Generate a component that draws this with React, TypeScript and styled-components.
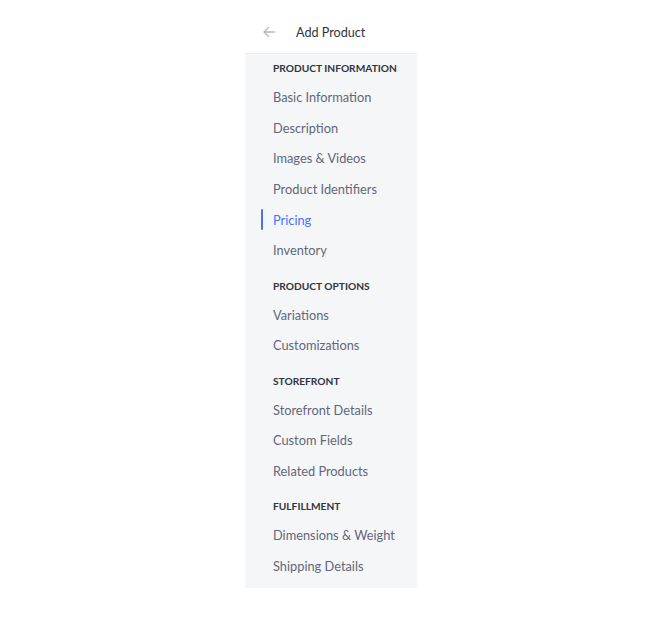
import React, { useState } from 'react';
import styled, { createGlobalStyle } from 'styled-components';

const GlobalStyle = createGlobalStyle`
  html, body {
    margin: 0;
    padding: 0;
    background: #fff;
  }
  body {
    font-family: Lato, "Liberation Sans", sans-serif;
    -webkit-font-smoothing: antialiased;
  }
`;

type Section = {
  title: string;
  items: string[];
};

const sections: Section[] = [
  {
    title: 'Product Information',
    items: ['Basic Information', 'Description', 'Images & Videos', 'Product Identifiers', 'Pricing', 'Inventory'],
  },
  {
    title: 'Product Options',
    items: ['Variations', 'Customizations'],
  },
  {
    title: 'Storefront',
    items: ['Storefront Details', 'Custom Fields', 'Related Products'],
  },
  {
    title: 'Fulfillment',
    items: ['Dimensions & Weight', 'Shipping Details'],
  },
];

const BackArrow = () => (
  <svg width="14" height="14" viewBox="0 0 14 14" fill="none">
    <path d="M12.5 7H2M6.5 2.5L2 7l4.5 4.5" stroke="#b4b8c4" strokeWidth="1.4" strokeLinecap="round" strokeLinejoin="round" />
  </svg>
);

export default function App() {
  const [active, setActive] = useState('Pricing');

  return (
    <Page>
      <GlobalStyle />
      <Sidebar>
        <Header>
          <BackButton aria-label="Back">
            <BackArrow />
          </BackButton>
          <HeaderTitle>Add Product</HeaderTitle>
        </Header>
        <Nav>
          {sections.map(section => (
            <Group key={section.title}>
              <GroupTitle>{section.title}</GroupTitle>
              {section.items.map(item => (
                <NavItem key={item} $active={item === active} onClick={() => setActive(item)}>
                  {item}
                </NavItem>
              ))}
            </Group>
          ))}
        </Nav>
      </Sidebar>
    </Page>
  );
}

const Page = styled.div`
  width: 665px;
  height: 617px;
  padding-top: 10px;
  box-sizing: border-box;
  padding-left: 245px;
`;

const Sidebar = styled.aside`
  width: 172px;
  display: flex;
  flex-direction: column;
`;

const Header = styled.div`
  height: 43px;
  display: flex;
  align-items: center;
  padding-left: 17px;
  box-sizing: border-box;
`;

const BackButton = styled.button`
  border: 0;
  background: none;
  padding: 0;
  width: 14px;
  height: 14px;
  display: flex;
  align-items: center;
  justify-content: center;
  margin-right: 20px;
  margin-top: 1px;
  cursor: pointer;
`;

const HeaderTitle = styled.h1`
  margin: 0 0 -1px;
  font-size: 12.6px;
  font-weight: 400;
  color: #313440;
`;

const Nav = styled.nav`
  background: #f5f6f8;
  border-top: 1px solid #eceef2;
  padding: 0 0 7px;
  display: flex;
  flex-direction: column;
`;

const Group = styled.div`
  display: flex;
  flex-direction: column;
`;

const GroupTitle = styled.div`
  padding: 10.2px 0 3.7px 28px;
  line-height: 20px;
  font-size: 10.2px;
  font-weight: 700;
  text-transform: uppercase;
  color: #313440;

  ${Group}:first-child > & {
    padding-top: 4.3px;
  }
`;

const NavItem = styled.div<{ $active?: boolean }>`
  position: relative;
  padding: 5.3px 0 5.3px 28px;
  line-height: 20px;
  font-size: 12.8px;
  color: ${p => (p.$active ? '#4b71fc' : '#62667a')};
  cursor: pointer;

  &::before {
    content: '';
    display: ${p => (p.$active ? 'block' : 'none')};
    position: absolute;
    left: 16px;
    top: 5px;
    bottom: 5px;
    width: 2px;
    border-radius: 1px;
    background: #4b71fc;
  }
`;
